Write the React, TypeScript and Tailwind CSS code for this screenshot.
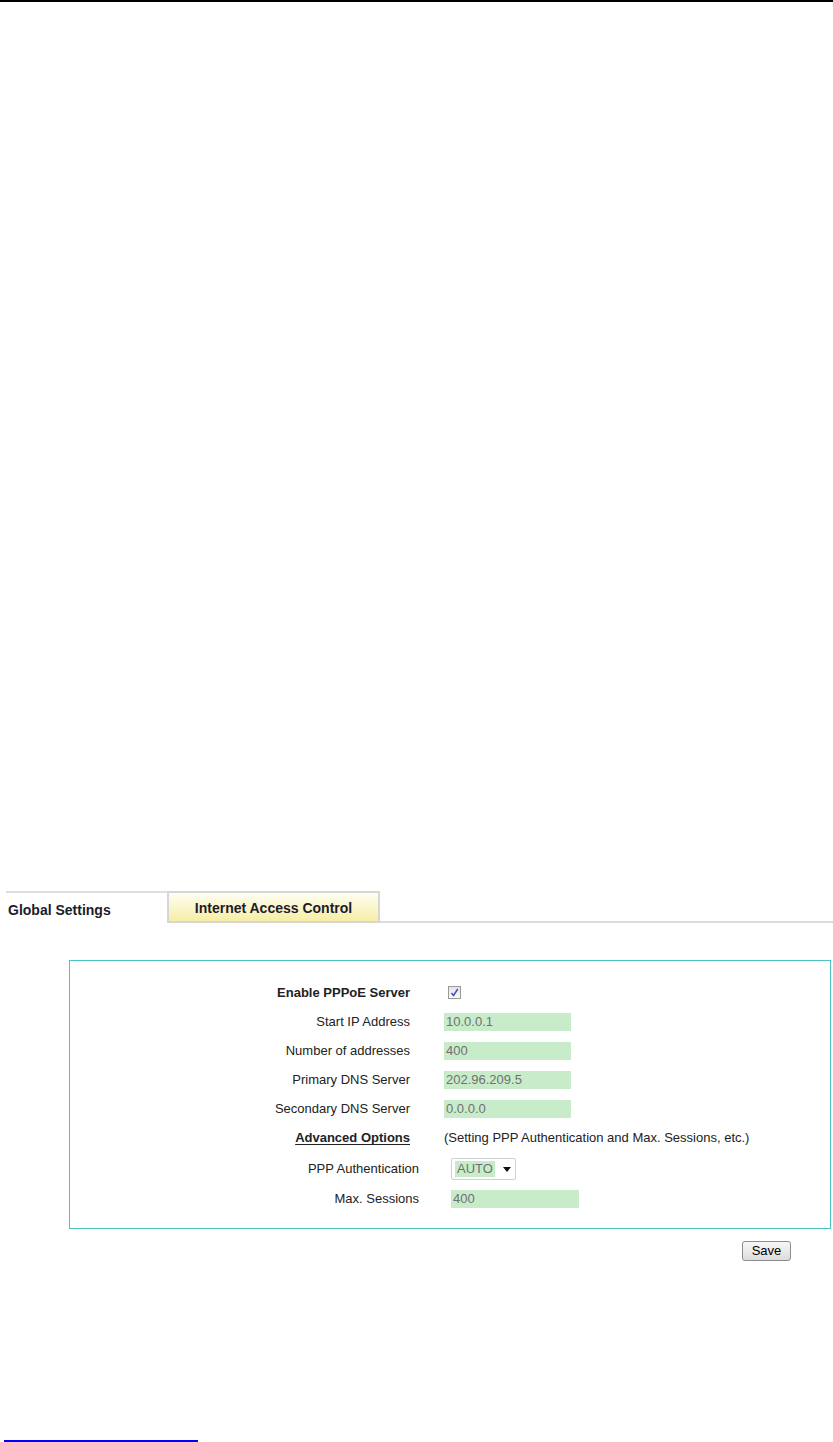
import React from "react";

const fields = [
  { label: "Start IP Address", value: "10.0.0.1" },
  { label: "Number of addresses", value: "400" },
  { label: "Primary DNS Server", value: "202.96.209.5" },
  { label: "Secondary DNS Server", value: "0.0.0.0" },
];

function GreenInput({ value, width }: { value: string; width: string }) {
  return (
    <div className={`${width} h-[18px] bg-[#c8ecca] text-[#707070] text-[13px] leading-[18px] pl-[2px]`}>
      {value}
    </div>
  );
}

export default function App() {
  return (
    <div className="w-[833px] h-[1442px] overflow-hidden bg-white flex flex-col font-['Liberation_Sans',Arial,sans-serif] text-[#222]">
      {/* header rule */}
      <div className="h-[2px] w-full bg-black shrink-0" />

      {/* Tabs */}
      <div className="mt-[889px] flex pl-[6px] h-[32px] shrink-0">
        <div className="w-[161px] border-t-2 border-[#dedede] flex items-center pl-[2px] pt-[4px] text-[14px] font-bold text-[#1c1c2a]">
          Global Settings
        </div>
        <div className="w-[213px] border-2 border-[#d6d6d6] bg-linear-to-b from-[#fffef2] to-[#f6eea4] flex items-center justify-center pt-[3px] text-[14px] font-bold text-[#1c1c2a]">
          Internet Access Control
        </div>
        <div className="flex-1 border-b-2 border-[#dcdcdc]" />
      </div>

      {/* Settings box */}
      <div className="mt-[37px] ml-[69px] w-[762px] h-[269px] shrink-0 border border-[#4cc4c4] flex flex-col pt-[17px] text-[13px]">
        <div className="flex items-center h-[29px]">
          <div className="w-[340px] text-right font-bold">Enable PPPoE Server</div>
          <div className="ml-[38px] w-[13px] h-[13px] border border-[#9a9a9a] bg-linear-to-b from-[#e4e4e4] to-[#fafafa] flex items-center justify-center">
            <svg width="9" height="9" viewBox="0 0 9 9">
              <path d="M1.5 5 L3.5 7.5 L7.8 1" fill="none" stroke="#3a4fb8" strokeWidth="1.4" />
            </svg>
          </div>
        </div>
        {fields.map((f) => (
          <div key={f.label} className="flex items-center h-[29px]">
            <div className="w-[340px] text-right">{f.label}</div>
            <div className="ml-[34px]">
              <GreenInput value={f.value} width="w-[127px]" />
            </div>
          </div>
        ))}
        <div className="flex items-center h-[30px]">
          <div className="w-[340px] text-right font-bold underline underline-offset-2">Advanced Options</div>
          <div className="ml-[34px]">(Setting PPP Authentication and Max. Sessions, etc.)</div>
        </div>
        <div className="flex items-center h-[32px]">
          <div className="w-[349px] text-right">PPP Authentication</div>
          <div className="ml-[32px] w-[65px] h-[22px] border border-[#d0d0d0] rounded-[2px] flex items-center pl-[3px]">
            <span className="bg-[#c8ecca] text-[#707070] px-[2px] leading-[16px]">AUTO</span>
            <svg className="ml-[8px]" width="8" height="5" viewBox="0 0 8 5">
              <path d="M0 0 L8 0 L4 5 Z" fill="#111" />
            </svg>
          </div>
        </div>
        <div className="flex items-center h-[28px]">
          <div className="w-[349px] text-right">Max. Sessions</div>
          <div className="ml-[32px]">
            <GreenInput value="400" width="w-[128px]" />
          </div>
        </div>
      </div>

      {/* Save */}
      <div className="mt-[12px] ml-[742px] flex shrink-0">
        <button
          type="button"
          className="w-[49px] h-[20px] border border-[#8c8c8c] rounded-[3px] bg-linear-to-b from-[#f7f7f7] to-[#dcdcdc] text-[13px] text-black leading-[18px]"
        >
          Save
        </button>
      </div>

      {/* link underline at bottom */}
      <div className="mt-auto ml-[4px] w-[194px] h-[2px] bg-[#0000ff] shrink-0" />
    </div>
  );
}
